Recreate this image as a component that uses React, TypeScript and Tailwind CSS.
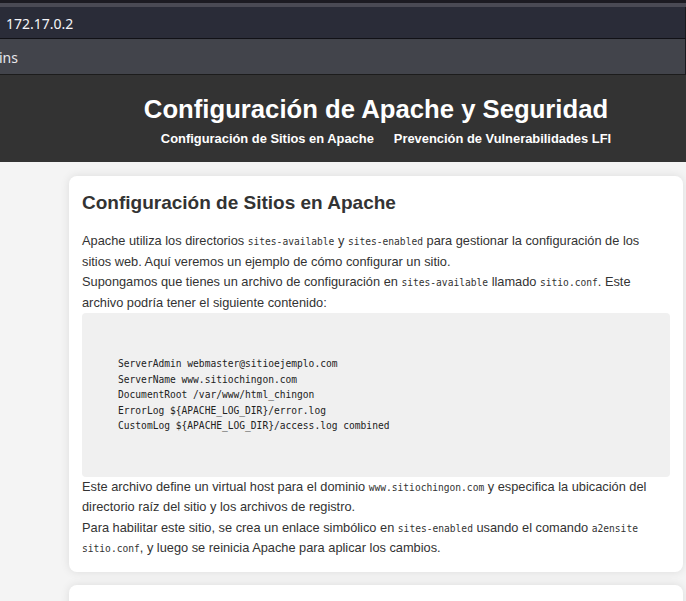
import React from "react";

const mono = "font-['DejaVu_Sans_Mono',monospace] text-[9.6px]";

function C({ children }: { children: React.ReactNode }) {
  return <code className={`${mono} leading-none`}>{children}</code>;
}

export default function App() {
  return (
    <div className="w-[686px] h-[601px] overflow-hidden bg-[#f4f4f4] flex flex-col font-['Liberation_Sans',Arial,sans-serif]">
      {/* browser chrome */}
      <div className="h-[3px] bg-[#1c1b22] shrink-0" />
      <div className="h-[4px] bg-[#4a4a54] shrink-0" />
      <div className="h-[32px] bg-[#2a2c38] border-b border-[#111116] border-r border-r-[#1a1a1f] flex items-center pl-[6px] shrink-0">
        <span className="font-['Noto_Sans',sans-serif] text-[14px] leading-none text-[#f5f5f8] mt-[2px]">172.17.0.2</span>
      </div>
      <div className="h-[36px] bg-[#42444b] border-b border-[#1c1c1c] border-r border-r-[#1a1a1f] flex items-center shrink-0">
        <span className="font-['Noto_Sans',sans-serif] text-[14px] leading-none text-[#e8e8ec] -ml-[1px] mt-[2px]">ins</span>
      </div>

      {/* header */}
      <header className="h-[87px] bg-[#333333] text-white flex flex-col items-center shrink-0 pl-[66px]">
        <h1 className="text-[25.7px] font-bold leading-[30px] mt-[19px]">Configuración de Apache y Seguridad</h1>
        <nav className="flex gap-[20px] text-[12.9px] font-bold leading-[16px] mt-[7px] pl-[20px]">
          <span>Configuración de Sitios en Apache</span>
          <span>Prevención de Vulnerabilidades LFI</span>
        </nav>
      </header>

      {/* main */}
      <main className="pl-[69px] pr-[3px] pt-[14px] flex flex-col gap-[13px]">
        <section className="bg-white rounded-[8px] shadow-[0_0_10px_rgba(0,0,0,0.1)] px-[13px] pt-[13px] pb-[13px] text-[#333333]">
          <h2 className="text-[19px] font-bold leading-[22px] mt-[3px] mb-[17px]">Configuración de Sitios en Apache</h2>
          <p className="text-[12.8px] leading-[20.5px] whitespace-nowrap">
            Apache utiliza los directorios <C>sites-available</C> y <C>sites-enabled</C> para gestionar la configuración de los
            <br />
            sitios web. Aquí veremos un ejemplo de cómo configurar un sitio.
            <br />
            Supongamos que tienes un archivo de configuración en <C>sites-available</C> llamado <C>sitio.conf</C>. Este
            <br />
            archivo podría tener el siguiente contenido:
          </p>
          <pre className={`bg-[#f0f0f0] rounded-[4px] py-[12px] pl-[36px] leading-[15.5px] text-[#222] ${mono}`}>
{`

ServerAdmin webmaster@sitioejemplo.com
ServerName www.sitiochingon.com
DocumentRoot /var/www/html_chingon
ErrorLog \${APACHE_LOG_DIR}/error.log
CustomLog \${APACHE_LOG_DIR}/access.log combined


`}
          </pre>
          <p className="text-[12.8px] leading-[20.5px] whitespace-nowrap">
            Este archivo define un virtual host para el dominio <C>www.sitiochingon.com</C> y especifica la ubicación del
            <br />
            directorio raíz del sitio y los archivos de registro.
            <br />
            Para habilitar este sitio, se crea un enlace simbólico en <C>sites-enabled</C> usando el comando <C>a2ensite</C>
            <br />
            <C>sitio.conf</C>, y luego se reinicia Apache para aplicar los cambios.
          </p>
        </section>
        <section className="bg-white rounded-[8px] shadow-[0_0_10px_rgba(0,0,0,0.1)] h-[60px] shrink-0" />
      </main>
    </div>
  );
}
